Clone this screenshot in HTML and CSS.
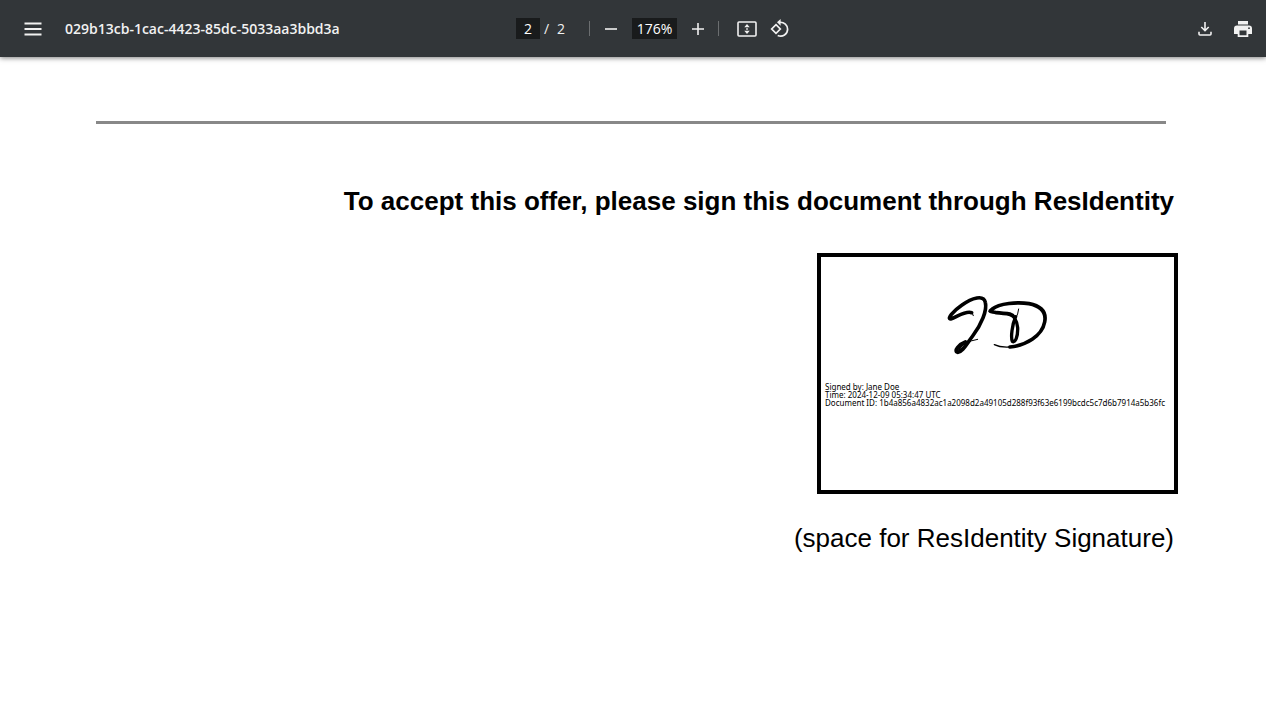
FILE: index.html
```html
<!DOCTYPE html>
<html lang="en">
<head>
<meta charset="utf-8">
<title>029b13cb-1cac-4423-85dc-5033aa3bbd3a</title>
<link rel="stylesheet" href="styles.css">
</head>
<body>
<header class="toolbar">
  <div class="start">
    <button class="icon-button" aria-label="Menu">
      <svg width="18" height="14" viewBox="0 0 18 14"><path d="M.5 1.5h17M.5 7h17M.5 12.5h17" fill="none" stroke="currentColor" stroke-width="1.8"/></svg>
    </button>
    <h1 class="title">029b13cb-1cac-4423-85dc-5033aa3bbd3a</h1>
  </div>
  <div class="center">
    <input class="field page-field" type="text" value="2" aria-label="Page number">
    <span class="slash">/</span>
    <span class="page-count">2</span>
    <span class="divider divider-pages"></span>
    <button class="icon-button" aria-label="Zoom out">
      <svg width="14" height="14" viewBox="0 0 14 14"><path d="M1 7h12" stroke="currentColor" stroke-width="1.6"/></svg>
    </button>
    <input class="field zoom-field" type="text" value="176%" aria-label="Zoom level">
    <button class="icon-button" aria-label="Zoom in">
      <svg width="14" height="14" viewBox="0 0 14 14"><path d="M1 7h12M7 1v12" stroke="currentColor" stroke-width="1.6"/></svg>
    </button>
    <span class="divider divider-zoom"></span>
    <button class="icon-button fit" aria-label="Fit to page">
      <svg width="20" height="16" viewBox="0 0 20 16"><rect x="1" y="1" width="18" height="14" rx="1" fill="none" stroke="currentColor" stroke-width="1.6"/><path d="M10 3l2.700 3.200H7.300zM10 13l2.700-3.200H7.300zM9.200 7.200h1.600v1.600H9.200z" fill="currentColor"/></svg>
    </button>
    <button class="icon-button rotate" aria-label="Rotate counterclockwise">
      <svg width="20" height="20" viewBox="0 0 20 20"><path d="M6 5.700L10.300 10 6 14.300 1.700 10z" fill="none" stroke="currentColor" stroke-width="1.700"/><path d="M9.500 3.300c4.800-.4 8.100 2.800 8.100 7 0 5.100-5 8.200-9.900 6.200" fill="none" stroke="currentColor" stroke-width="1.700"/><path d="M10.600 0v6.700L7 3.300z" fill="currentColor"/></svg>
    </button>
  </div>
  <div class="end">
    <button class="icon-button" aria-label="Download">
      <svg width="14" height="14" viewBox="0 0 14 14"><path d="M7 0v8M3.300 5L7 8.700 10.700 5M1 9.800V12q0 1 1 1h10q1 0 1-1V9.800" fill="none" stroke="currentColor" stroke-width="1.600"/></svg>
    </button>
    <button class="icon-button" aria-label="Print">
      <svg width="18" height="16" viewBox="0 0 18 16"><path d="M4 0h10v3.600H4zM3 4.500h12a3 3 0 0 1 3 3V13h-3.700v3H3.700v-3H0V7.500a3 3 0 0 1 3-3zM5.500 9.500v4.700h7V9.500zM15 6.300a.9.9 0 1 0 0 1.800.9.9 0 0 0 0-1.800z" fill="currentColor" fill-rule="evenodd"/></svg>
    </button>
  </div>
</header>
<main class="page">
  <hr class="rule">
  <h2 class="heading">To accept this offer, please sign this document through ResIdentity</h2>
  <section class="signature-box" aria-label="Signature">
    <svg class="signature" width="130" height="90" viewBox="0 0 390 270" role="img" aria-label="JD">
      <g fill="none" stroke="#000" stroke-linecap="round" stroke-linejoin="round">
        <path d="M122 98C104 91 78 111 59 117C47 117 66 94 92 76C124 52 158 44 163 67C169 91 151 134 125 168C106 193 94 216 80 217C67 213 84 193 103 186" stroke-width="11"/>
        <path d="M113 95Q123 94 127 107" stroke-width="3"/>
        <path d="M84 209Q91 194 107 187" stroke-width="6"/>
        <path d="M105 188Q120 182 140 178" stroke-width="3"/>
        <path d="M250 112C240 97 222 102 196 98C178 94 170 96 184 87C204 70 260 65 294 71C329 78 347 96 341 126C333 169 284 196 237 201" stroke-width="11"/>
        <path d="M237 201Q208 203 190 194" stroke-width="4"/>
        <path d="M263 87Q261 104 255 113" stroke-width="3"/>
        <path d="M254 110C243 134 239 173 244 184C253 190 261 169 260 143Q259 127 250 113" stroke-width="10"/>
      </g>
    </svg>
    <p class="details">Signed by: Jane Doe<br>Time: 2024-12-09 05:34:47 UTC<br>Document ID: 1b4a856a4832ac1a2098d2a49105d288f93f63e6199bcdc5c7d6b7914a5b36fc</p>
  </section>
  <p class="caption">(space for ResIdentity Signature)</p>
</main>
</body>
</html>
```
FILE: styles.css
```css
* {
  box-sizing: border-box;
}

body {
  margin: 0;
  background: #fff;
  color: #000;
  font-family: "Liberation Sans", Arial, sans-serif;
}

.toolbar {
  display: flex;
  align-items: center;
  height: 57px;
  padding: 0 14px 0 24px;
  background: #323639;
  color: #f1f1f1;
  font-family: "Open Sans", "Noto Sans", sans-serif;
  font-size: 14px;
  line-height: 20px;
  box-shadow: 0 1px 5px rgba(0, 0, 0, 0.5);
}

.start,
.end {
  display: flex;
  flex: 1;
  align-items: center;
}

.start {
  gap: 23px;
}

.end {
  justify-content: flex-end;
  gap: 22px;
}

.center {
  display: flex;
  align-items: center;
  padding-left: 30px;
}

.title {
  margin: 0;
  font-size: 14px;
  font-weight: 600;
  line-height: 20px;
  white-space: nowrap;
}

.icon-button {
  display: flex;
  padding: 0;
  border: 0;
  background: none;
  color: inherit;
}

.field {
  height: 21px;
  padding: 0;
  border: 0;
  background: #191b1c;
  color: #fff;
  font: inherit;
  text-align: center;
}

.page-field {
  width: 24px;
}

.zoom-field {
  width: 45px;
  margin: 0 14px;
}

.slash {
  margin: 0 8px 0 4px;
}

.divider {
  width: 1px;
  height: 15px;
  background: #6b6e70;
}

.divider-pages {
  margin: 0 14px 0 24px;
}

.divider-zoom {
  margin: 0 18px 0 13px;
}

.rotate {
  margin-left: 13px;
}

.page {
  display: flex;
  flex-direction: column;
  align-items: flex-end;
  padding: 64px 88px 0 96px;
}

.rule {
  align-self: stretch;
  height: 3px;
  margin: 0 12px 0 0;
  border: 0;
  background: #888;
}

.heading {
  margin: 61px 4px 0 0;
  font-size: 26px;
  line-height: 32px;
}

.signature-box {
  display: flex;
  flex-direction: column;
  min-width: 361px;
  min-height: 241px;
  margin-top: 36px;
  padding: 23px 4px 0;
  border: 4px solid #000;
}

.signature {
  align-self: center;
  margin-right: 4px;
}

.details {
  margin: 13px 0 0;
  font-family: "Noto Sans", sans-serif;
  font-size: 8px;
  line-height: 8px;
}

.caption {
  margin: 28px 4px 0 0;
  font-size: 26px;
  line-height: 32px;
}
```
